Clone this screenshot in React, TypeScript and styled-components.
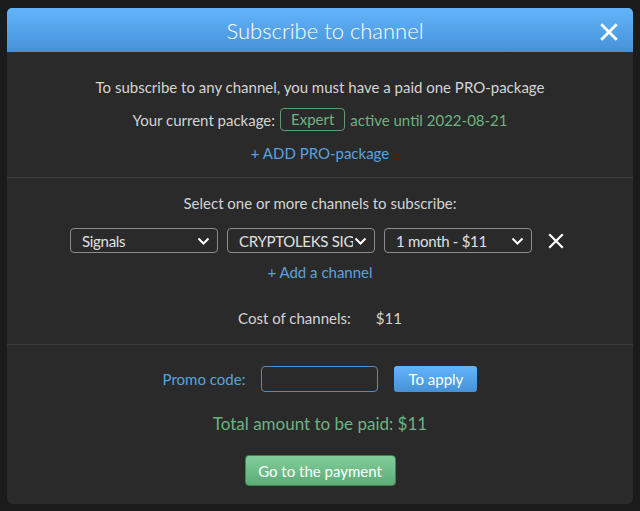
import React from 'react';
import styled, { createGlobalStyle } from 'styled-components';

const GlobalStyle = createGlobalStyle`
    html, body {
        margin: 0;
        padding: 0;
        background: rgb(27, 27, 27);
        font-family: Lato, 'Noto Sans', sans-serif;
    }
`;

const Page = styled('div')`
    width: 640px;
    height: 511px;
    padding: 8px 7px 7px;
    box-sizing: border-box;
    overflow: hidden;
`;

const Modal = styled('div')`
    width: 626px;
    height: 496px;
    background-color: rgb(42, 42, 42);
    border-radius: 5px;
    overflow: hidden;
    display: flex;
    flex-direction: column;
`;

const Header = styled('div')`
    height: 44px;
    flex-shrink: 0;
    background: linear-gradient(rgb(99, 181, 251), rgb(69, 145, 216));
    color: rgb(255, 255, 255);
    display: flex;
    align-items: center;
    justify-content: center;
    position: relative;
    font-size: 22px;
    font-weight: 300;
    padding-left: 10px;
`;

const CloseButton = styled('button')`
    position: absolute;
    right: 15px;
    top: 15px;
    width: 18px;
    height: 18px;
    padding: 0;
    border: none;
    background: none;
    cursor: pointer;
`;

const Section = styled('div')<{ pad: string; last?: boolean }>`
    padding: ${(props) => props.pad};
    border-bottom: ${(props) => (props.last ? 'none' : 'solid 1px rgb(60, 60, 60)')};
    display: flex;
    flex-direction: column;
    align-items: center;
    color: rgb(212, 212, 212);
    font-size: 15px;
`;

const Line = styled('div')`
    height: 33px;
    display: flex;
    align-items: center;
    justify-content: center;
    gap: 5px;
`;

const Badge = styled('span')`
    border: solid 1px rgb(92, 156, 112);
    border-radius: 4px;
    color: rgb(109, 179, 131);
    padding: 1px 10px;
    line-height: 19px;
`;

const Green = styled('span')`
    color: rgb(109, 179, 131);
`;

const Link = styled('a')`
    color: rgb(90, 162, 223);
    text-decoration: none;
    cursor: pointer;
`;

const Caption = styled('div')`
    line-height: 20px;
`;

const SelectRow = styled('div')`
    display: flex;
    align-items: center;
    gap: 9px;
    margin: 15px 6px 9px 0;
`;

const Select = styled('div')`
    width: 148px;
    height: 25px;
    box-sizing: border-box;
    border: solid 1px rgb(140, 140, 140);
    border-radius: 4px;
    display: flex;
    align-items: center;
    padding: 0 7px 0 11px;
    font-size: 15px;
    letter-spacing: -0.3px;
    color: rgb(224, 224, 224);
    gap: 1px;
`;

const SelectText = styled('span')`
    flex: 1;
    overflow: hidden;
    white-space: nowrap;
`;

const RemoveButton = styled('button')`
    margin-left: 7px;
    width: 16px;
    height: 16px;
    padding: 0;
    border: none;
    background: none;
    cursor: pointer;
`;

const CostRow = styled('div')`
    margin-top: 26px;
    line-height: 20px;
    display: flex;
    gap: 25px;
`;

const PromoRow = styled('div')`
    display: flex;
    align-items: center;
    gap: 16px;
`;

const PromoInput = styled('input')`
    width: 117px;
    height: 26px;
    box-sizing: border-box;
    border: solid 1px rgb(74, 143, 208);
    border-radius: 4px;
    background: transparent;
    outline: none;
    color: rgb(220, 220, 220);
`;

const ApplyButton = styled('button')`
    width: 83px;
    height: 26px;
    border: none;
    border-radius: 3px;
    background: linear-gradient(rgb(99, 181, 251), rgb(69, 145, 216));
    color: rgb(255, 255, 255);
    font-family: inherit;
    font-size: 15px;
    cursor: pointer;
`;

const Total = styled('div')`
    margin-top: 21px;
    line-height: 22px;
    font-size: 17px;
    color: rgb(109, 179, 131);
`;

const PayButton = styled('button')`
    margin-top: 20px;
    width: 151px;
    height: 31px;
    border: solid 1px rgb(70, 130, 90);
    border-radius: 4px;
    background: linear-gradient(rgb(130, 206, 155), rgb(92, 172, 118));
    color: rgb(255, 255, 255);
    font-family: inherit;
    font-size: 15px;
    cursor: pointer;
`;

const Cross = ({ size, stroke }: { size: number; stroke: number }) => (
    <svg width={size} height={size} viewBox="0 0 16 16">
        <path d="M2 2L14 14M14 2L2 14" stroke="white" strokeWidth={stroke} strokeLinecap="square" />
    </svg>
);

const Chevron = () => (
    <svg width="13" height="8" viewBox="0 0 13 8" style={{ flexShrink: 0 }}>
        <path d="M1.5 1.5L6.5 6.5L11.5 1.5" stroke="white" strokeWidth="2" fill="none" />
    </svg>
);

const selects = ['Signals', 'CRYPTOLEKS SIGNALS', '1 month - $11'];

export default function App() {
    return (
        <>
            <GlobalStyle />
            <Page>
                <Modal>
                    <Header>
                        Subscribe to channel
                        <CloseButton>
                            <Cross size={18} stroke={2.5} />
                        </CloseButton>
                    </Header>
                    <Section pad="18px 0 8px">
                        <Line>To subscribe to any channel, you must have a paid one PRO-package</Line>
                        <Line>
                            <span>Your current package:</span>
                            <Badge>Expert</Badge>
                            <Green>active until 2022-08-21</Green>
                        </Line>
                        <Line>
                            <Link>+ ADD PRO-package</Link>
                        </Line>
                    </Section>
                    <Section pad="15px 0 16px">
                        <Caption>Select one or more channels to subscribe:</Caption>
                        <SelectRow>
                            {selects.map((s) => (
                                <Select key={s}>
                                    <SelectText>{s}</SelectText>
                                    <Chevron />
                                </Select>
                            ))}
                            <RemoveButton>
                                <Cross size={16} stroke={2.2} />
                            </RemoveButton>
                        </SelectRow>
                        <Caption>
                            <Link>+ Add a channel</Link>
                        </Caption>
                        <CostRow>
                            <span>Cost of channels:</span>
                            <span>$11</span>
                        </CostRow>
                    </Section>
                    <Section pad="21px 0 18px" last>
                        <PromoRow>
                            <Link>Promo code:</Link>
                            <PromoInput />
                            <ApplyButton>To apply</ApplyButton>
                        </PromoRow>
                        <Total>Total amount to be paid: $11</Total>
                        <PayButton>Go to the payment</PayButton>
                    </Section>
                </Modal>
            </Page>
        </>
    );
}
